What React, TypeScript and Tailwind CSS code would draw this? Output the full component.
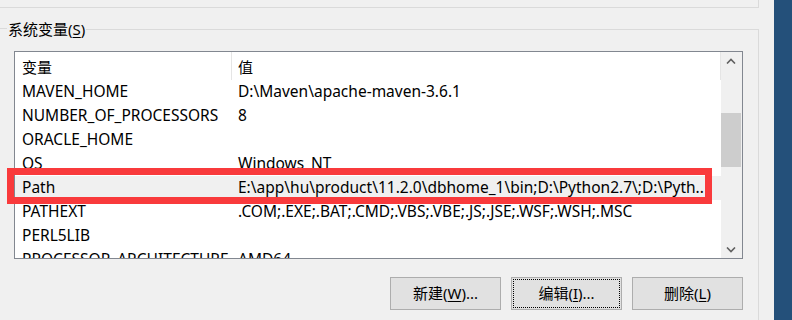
import React from 'react';

type EnvVar = { name: string; value: string; selected?: boolean };

const vars: EnvVar[] = [
  { name: 'MAVEN_HOME', value: 'D:\\Maven\\apache-maven-3.6.1' },
  { name: 'NUMBER_OF_PROCESSORS', value: '8' },
  { name: 'ORACLE_HOME', value: '' },
  { name: 'OS', value: 'Windows_NT' },
  { name: 'Path', value: 'E:\\app\\hu\\product\\11.2.0\\dbhome_1\\bin;D:\\Python2.7\\;D:\\Pyth..', selected: true },
  { name: 'PATHEXT', value: '.COM;.EXE;.BAT;.CMD;.VBS;.VBE;.JS;.JSE;.WSF;.WSH;.MSC' },
  { name: 'PERL5LIB', value: '' },
  { name: 'PROCESSOR_ARCHITECTURE', value: 'AMD64' },
];

function Chevron({ up }: { up?: boolean }) {
  return (
    <svg width="10" height="6" viewBox="0 0 10 6" className="block">
      <path
        d={up ? 'M1 5.5 L5 1.5 L9 5.5' : 'M1 0.5 L5 4.5 L9 0.5'}
        fill="none"
        stroke="#606060"
        strokeWidth="1.6"
      />
    </svg>
  );
}

function WinButton({ label, hotkey, suffix, focused }: { label: string; hotkey: string; suffix: string; focused?: boolean }) {
  return (
    <div className="relative flex h-[33px] w-[111px] items-center justify-center border border-[#adadad] bg-[#e1e1e1] text-[15px] text-black">
      {focused && <div className="absolute inset-[1px] border border-dotted border-black" />}
      <span>
        {label}(<span className="underline underline-offset-2">{hotkey}</span>){suffix}
      </span>
    </div>
  );
}

export default function App() {
  return (
    <div className="relative flex h-[320px] w-[792px] overflow-hidden bg-[#f0f0f0] font-['Noto_Sans','Noto_Sans_CJK_SC',sans-serif] text-black">
      <div className="w-[774px] flex-none">
        <div className="w-[759px]">
          {/* bottom of the user variables group */}
          <div className="h-[8px] border-r border-b border-[#dadada]" />

          {/* system variables group header */}
          <div className="mt-[11px] flex h-[20px]">
            <div className="w-[7px] flex-none">
              <div className="h-[10px] border-b border-[#dadada]" />
            </div>
            <span className="px-[1px] text-[15px] leading-[20px]">
              系统变量(<span className="underline underline-offset-2">S</span>)
            </span>
            <div className="flex flex-1 flex-col">
              <div className="h-[10px]" />
              <div className="flex-1 border-t border-r border-[#dadada]" />
            </div>
          </div>

          <div className="border-r border-[#dadada] pt-[12px] pb-[20px] pl-[14px] pr-[16px]">
            {/* list view */}
            <div className="flex h-[208px] w-[729px] border border-[#828790] bg-white">
              <div className="w-[706px] flex-none overflow-hidden text-[15.5px]">
                <div className="flex h-[28px] items-center text-[15px]">
                  <div className="flex h-full w-[217px] items-center border-r border-[#e5e5e5] pl-[7px] pt-[3px]">变量</div>
                  <div className="flex h-full flex-1 items-center border-r border-[#e5e5e5] pl-[6px] pt-[3px]">值</div>
                </div>
                {vars.map((v) => (
                  <div
                    key={v.name}
                    className={`flex h-[24px] items-center whitespace-nowrap ${v.selected ? 'bg-[#f0f0f0]' : ''}`}
                  >
                    <div className="w-[217px] flex-none overflow-hidden pl-[7px]">{v.name}</div>
                    <div className="flex-1 overflow-hidden pl-[6px]">{v.value}</div>
                  </div>
                ))}
              </div>

              {/* vertical scrollbar */}
              <div className="flex w-[21px] flex-none flex-col bg-[#f0f0f0]">
                <div className="flex h-[17px] items-center justify-center pr-[1px]">
                  <Chevron up />
                </div>
                <div className="flex-1">
                  <div className="mt-[44px] h-[54px] w-[20px] bg-[#cdcdcd]" />
                </div>
                <div className="flex h-[17px] items-center justify-center pr-[1px]">
                  <Chevron />
                </div>
              </div>
            </div>

            {/* buttons */}
            <div className="mt-[18px] flex w-[729px] justify-end gap-[10px]">
              <WinButton label="新建" hotkey="W" suffix="..." />
              <WinButton label="编辑" hotkey="I" suffix="..." focused />
              <WinButton label="删除" hotkey="L" suffix="" />
            </div>
          </div>
        </div>
      </div>

      {/* desktop behind the dialog */}
      <div className="flex-1 bg-[#24507a]" />

      {/* red annotation box */}
      <div className="absolute left-[7px] top-[168px] h-[36px] w-[705px] border-[7px] border-[#f93a3c]" />
    </div>
  );
}
